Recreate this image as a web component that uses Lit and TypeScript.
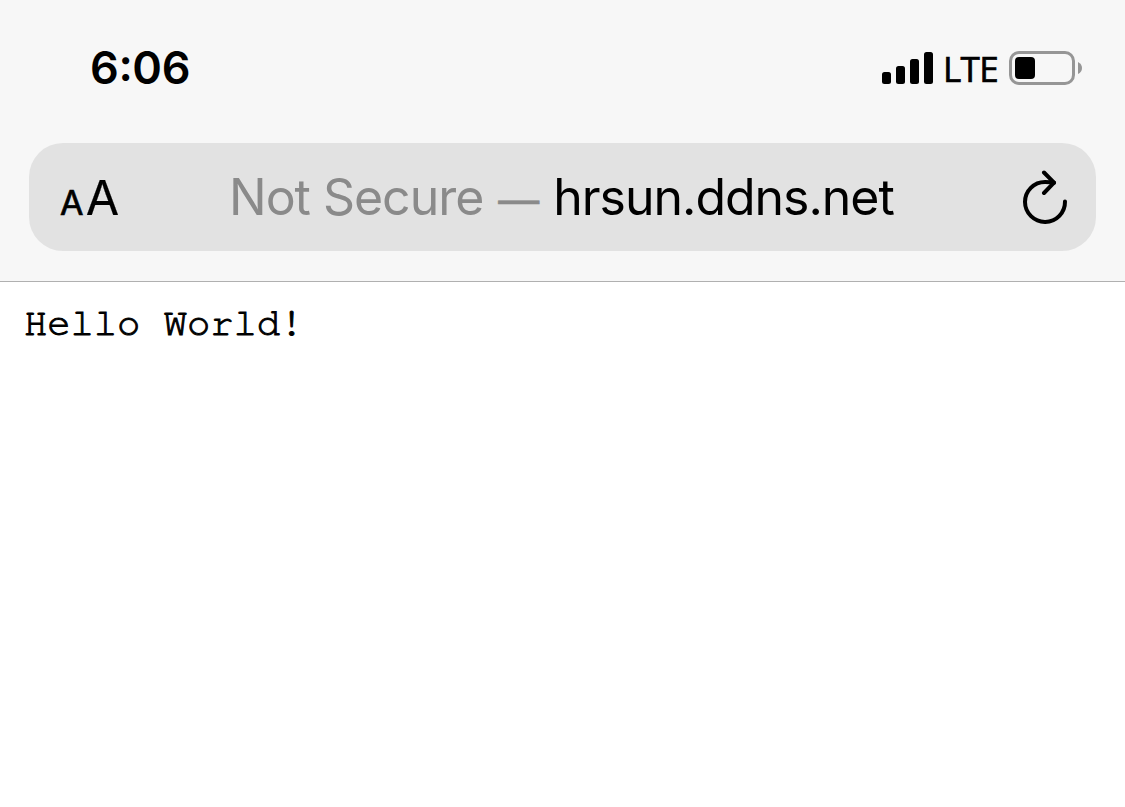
import { LitElement, html, css } from "lit";
import { customElement } from "lit/decorators.js";

@customElement("status-bar")
class StatusBar extends LitElement {
  static styles = css`
    :host { display: flex; justify-content: space-between; height: 143px; box-sizing: border-box; padding: 40px 42px 0 90px; color: #000; }
    .time { font: 600 45px/56px Inter, sans-serif; letter-spacing: -0.4px; white-space: nowrap; }
    .colon { vertical-align: 3px; line-height: 0; }
    .right { display: flex; height: 58px; }
    .lte { width: 55px; margin-left: 9px; font: 400 35px/57px "Open Sans", sans-serif; letter-spacing: -0.7px; -webkit-text-stroke: 0.7px #000; }
    svg { display: block; margin-top: 10px; }
    .battery { margin-left: 11px; }
  `;
  render() {
    return html`
      <div class="time">6<span class="colon">:</span>06</div>
      <div class="right">
        <svg width="52" height="36" viewBox="0 0 52 36">
          <rect x="0" y="22" width="9" height="12" rx="2.5" />
          <rect x="14" y="16" width="9" height="18" rx="2.5" />
          <rect x="28" y="9" width="9" height="25" rx="2.5" />
          <rect x="42" y="2" width="9" height="32" rx="2.5" />
        </svg>
        <span class="lte">LTE</span>
        <svg class="battery" width="74" height="36" viewBox="0 0 74 36">
          <rect x="1.5" y="2.5" width="63" height="31" rx="8.5" fill="none" stroke="#969696" stroke-width="3" />
          <rect x="6" y="7" width="20" height="22" rx="4" />
          <path d="M69 12 Q73 14 73 18 Q73 22 69 24 Z" fill="#969696" />
        </svg>
      </div>
    `;
  }
}

@customElement("address-bar")
class AddressBar extends LitElement {
  static styles = css`
    :host { display: flex; align-items: center; height: 108px; box-sizing: border-box; margin: 0 29px; padding: 0 28px 0 31px; background: #e2e2e2; border-radius: 34px; font-family: Inter, sans-serif; color: #000; }
    .size { display: flex; align-items: baseline; width: 169px; height: 60px; padding-top: 1px; line-height: 60px; white-space: nowrap; }
    .small { font-size: 34px; margin-right: 3px; letter-spacing: -0.8px; -webkit-text-stroke: 0.7px #000; }
    .big { font-size: 48.5px; line-height: 60px; -webkit-text-stroke: 0.2px #000; }
    .url { flex: 1; display: flex; align-items: baseline; padding-top: 3px; font-size: 50px; line-height: 60px; letter-spacing: -1.03px; white-space: nowrap; }
    .state { color: #8a8a8a; }
    .dash { font-size: 41px; margin: 0 14px 0 15px; letter-spacing: 0; color: #8a8a8a; -webkit-text-stroke: 0.6px #8a8a8a; }
    svg { display: block; margin-top: 2px; }
  `;
  render() {
    return html`
      <div class="size"><span class="small">A</span><span class="big">A</span></div>
      <div class="url"><span class="state">Not Secure</span><span class="dash">—</span><span class="host">hrsun.ddns.net</span></div>
      <svg width="48" height="56" viewBox="0 0 48 56" fill="none" stroke="#000" stroke-width="4" stroke-linecap="round" stroke-linejoin="round">
        <path d="M34 12.7 C31 11.9 28 11.9 25 11.9 A20 20 0 1 0 45 31.5" />
        <path d="M24 2.5 L34 12.7 L24 23" />
      </svg>
    `;
  }
}

@customElement("app-root")
class AppRoot extends LitElement {
  static styles = css`
    :host { display: block; height: 807px; background: #fff; overflow: hidden; }
    header { height: 282px; box-sizing: border-box; background: #f7f7f7; border-bottom: 1px solid #b0b0b0; }
    pre { margin: 0; padding: 20px 24px; font: 38.8px/44px "Courier 10 Pitch", "Nimbus Mono PS", "FreeMono", "Liberation Mono", monospace; color: #000; -webkit-text-stroke: 1px #000; }
  `;
  render() {
    return html`
      <header><status-bar></status-bar><address-bar></address-bar></header>
      <pre>Hello World!</pre>
    `;
  }
}
